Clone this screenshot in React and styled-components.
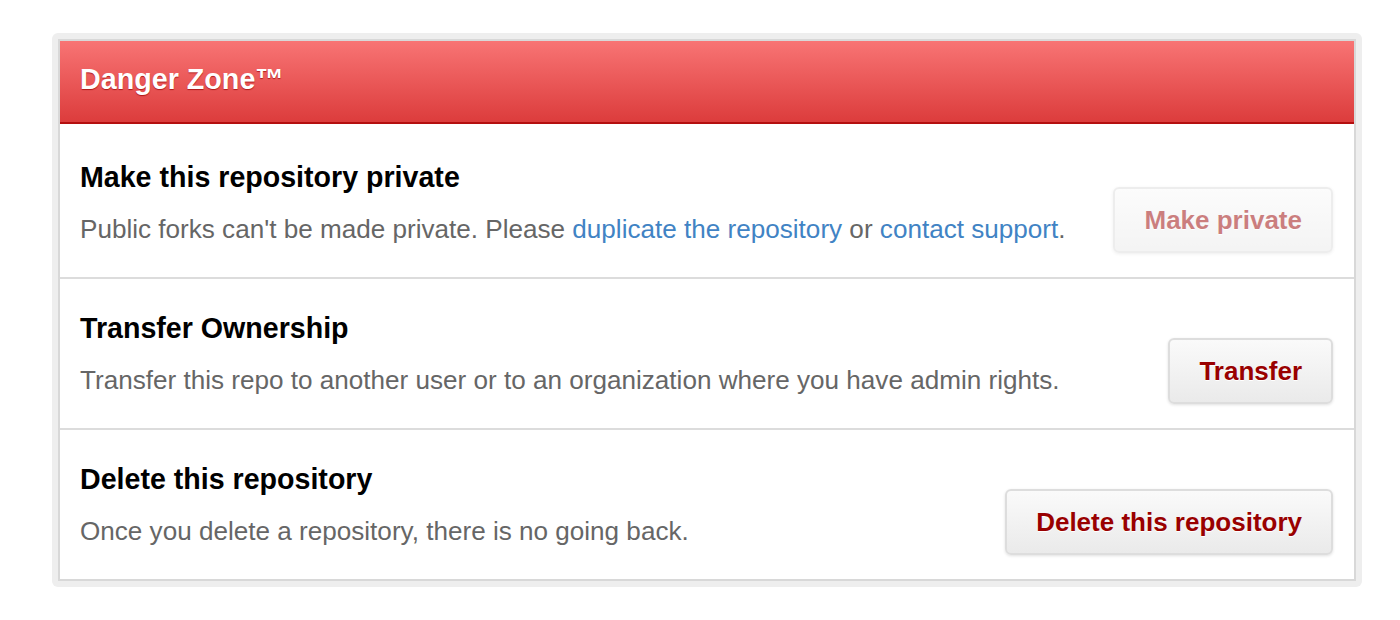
import React from "react";
import styled, { createGlobalStyle } from "styled-components";

const GlobalStyle = createGlobalStyle`
  html, body {
    margin: 0;
    padding: 0;
    background: #ffffff;
    font-family: "Liberation Sans", Arial, Helvetica, sans-serif;
  }
`;

const Page = styled.div`
  padding: 33px 0 0 52px;
`;

const Frame = styled.div`
  width: 1310px;
  box-sizing: border-box;
  padding: 6px;
  background: #eeeeee;
  border-radius: 6px;
`;

const Box = styled.div`
  border: 2px solid #d8d8d8;
  background: #ffffff;
`;

const Header = styled.h3`
  margin: 0;
  padding: 22px 20px 27px;
  line-height: 32px;
  font-size: 28.7px;
  font-weight: bold;
  color: #ffffff;
  text-shadow: 0 1px 1px rgba(150, 0, 0, 0.7);
  background: linear-gradient(to bottom, #f87474 0%, #dc3c3c 100%);
  border-bottom: 2px solid #b40f0f;
`;

const Row = styled.div`
  display: flex;
  align-items: flex-start;
  justify-content: space-between;
  gap: 24px;
  padding: ${(p) => (p.$first ? "36px" : "32px")} 21px 24px 20px;
  border-top: ${(p) => (p.$first ? "none" : "2px solid #dcdcdc")};
`;

const Info = styled.div`
  display: flex;
  flex-direction: column;
  gap: 18px;
`;

const Title = styled.h4`
  margin: 0;
  font-size: 28.6px;
  line-height: 34px;
  font-weight: bold;
  color: #000000;
`;

const Desc = styled.p`
  margin: 0;
  font-size: 26.1px;
  line-height: 34px;
  color: #666666;
`;

const Link = styled.a`
  color: #4183c4;
  text-decoration: none;
`;

const Button = styled.button`
  flex: none;
  margin-top: 27px;
  box-sizing: border-box;
  height: 66px;
  padding: 0 29px;
  font-family: inherit;
  font-size: 26px;
  font-weight: bold;
  color: #990000;
  text-shadow: 0 1px 0 #ffffff;
  background: linear-gradient(to bottom, #fafafa 0%, #eaeaea 100%);
  border: 2px solid #dddddd;
  border-radius: 6px;
  box-shadow: 0 1px 3px rgba(0, 0, 0, 0.12);
  cursor: pointer;
  opacity: ${(p) => (p.disabled ? 0.5 : 1)};
`;

export default function App() {
  return (
    <>
      <GlobalStyle />
      <Page>
        <Frame>
          <Box>
            <Header>Danger Zone™</Header>
            <Row $first>
              <Info>
                <Title>Make this repository private</Title>
                <Desc>
                  Public forks can't be made private. Please{" "}
                  <Link href="#">duplicate the repository</Link> or{" "}
                  <Link href="#">contact support</Link>.
                </Desc>
              </Info>
              <Button disabled>Make private</Button>
            </Row>
            <Row>
              <Info>
                <Title>Transfer Ownership</Title>
                <Desc>
                  Transfer this repo to another user or to an organization where
                  you have admin rights.
                </Desc>
              </Info>
              <Button>Transfer</Button>
            </Row>
            <Row>
              <Info>
                <Title>Delete this repository</Title>
                <Desc>Once you delete a repository, there is no going back.</Desc>
              </Info>
              <Button>Delete this repository</Button>
            </Row>
          </Box>
        </Frame>
      </Page>
    </>
  );
}
